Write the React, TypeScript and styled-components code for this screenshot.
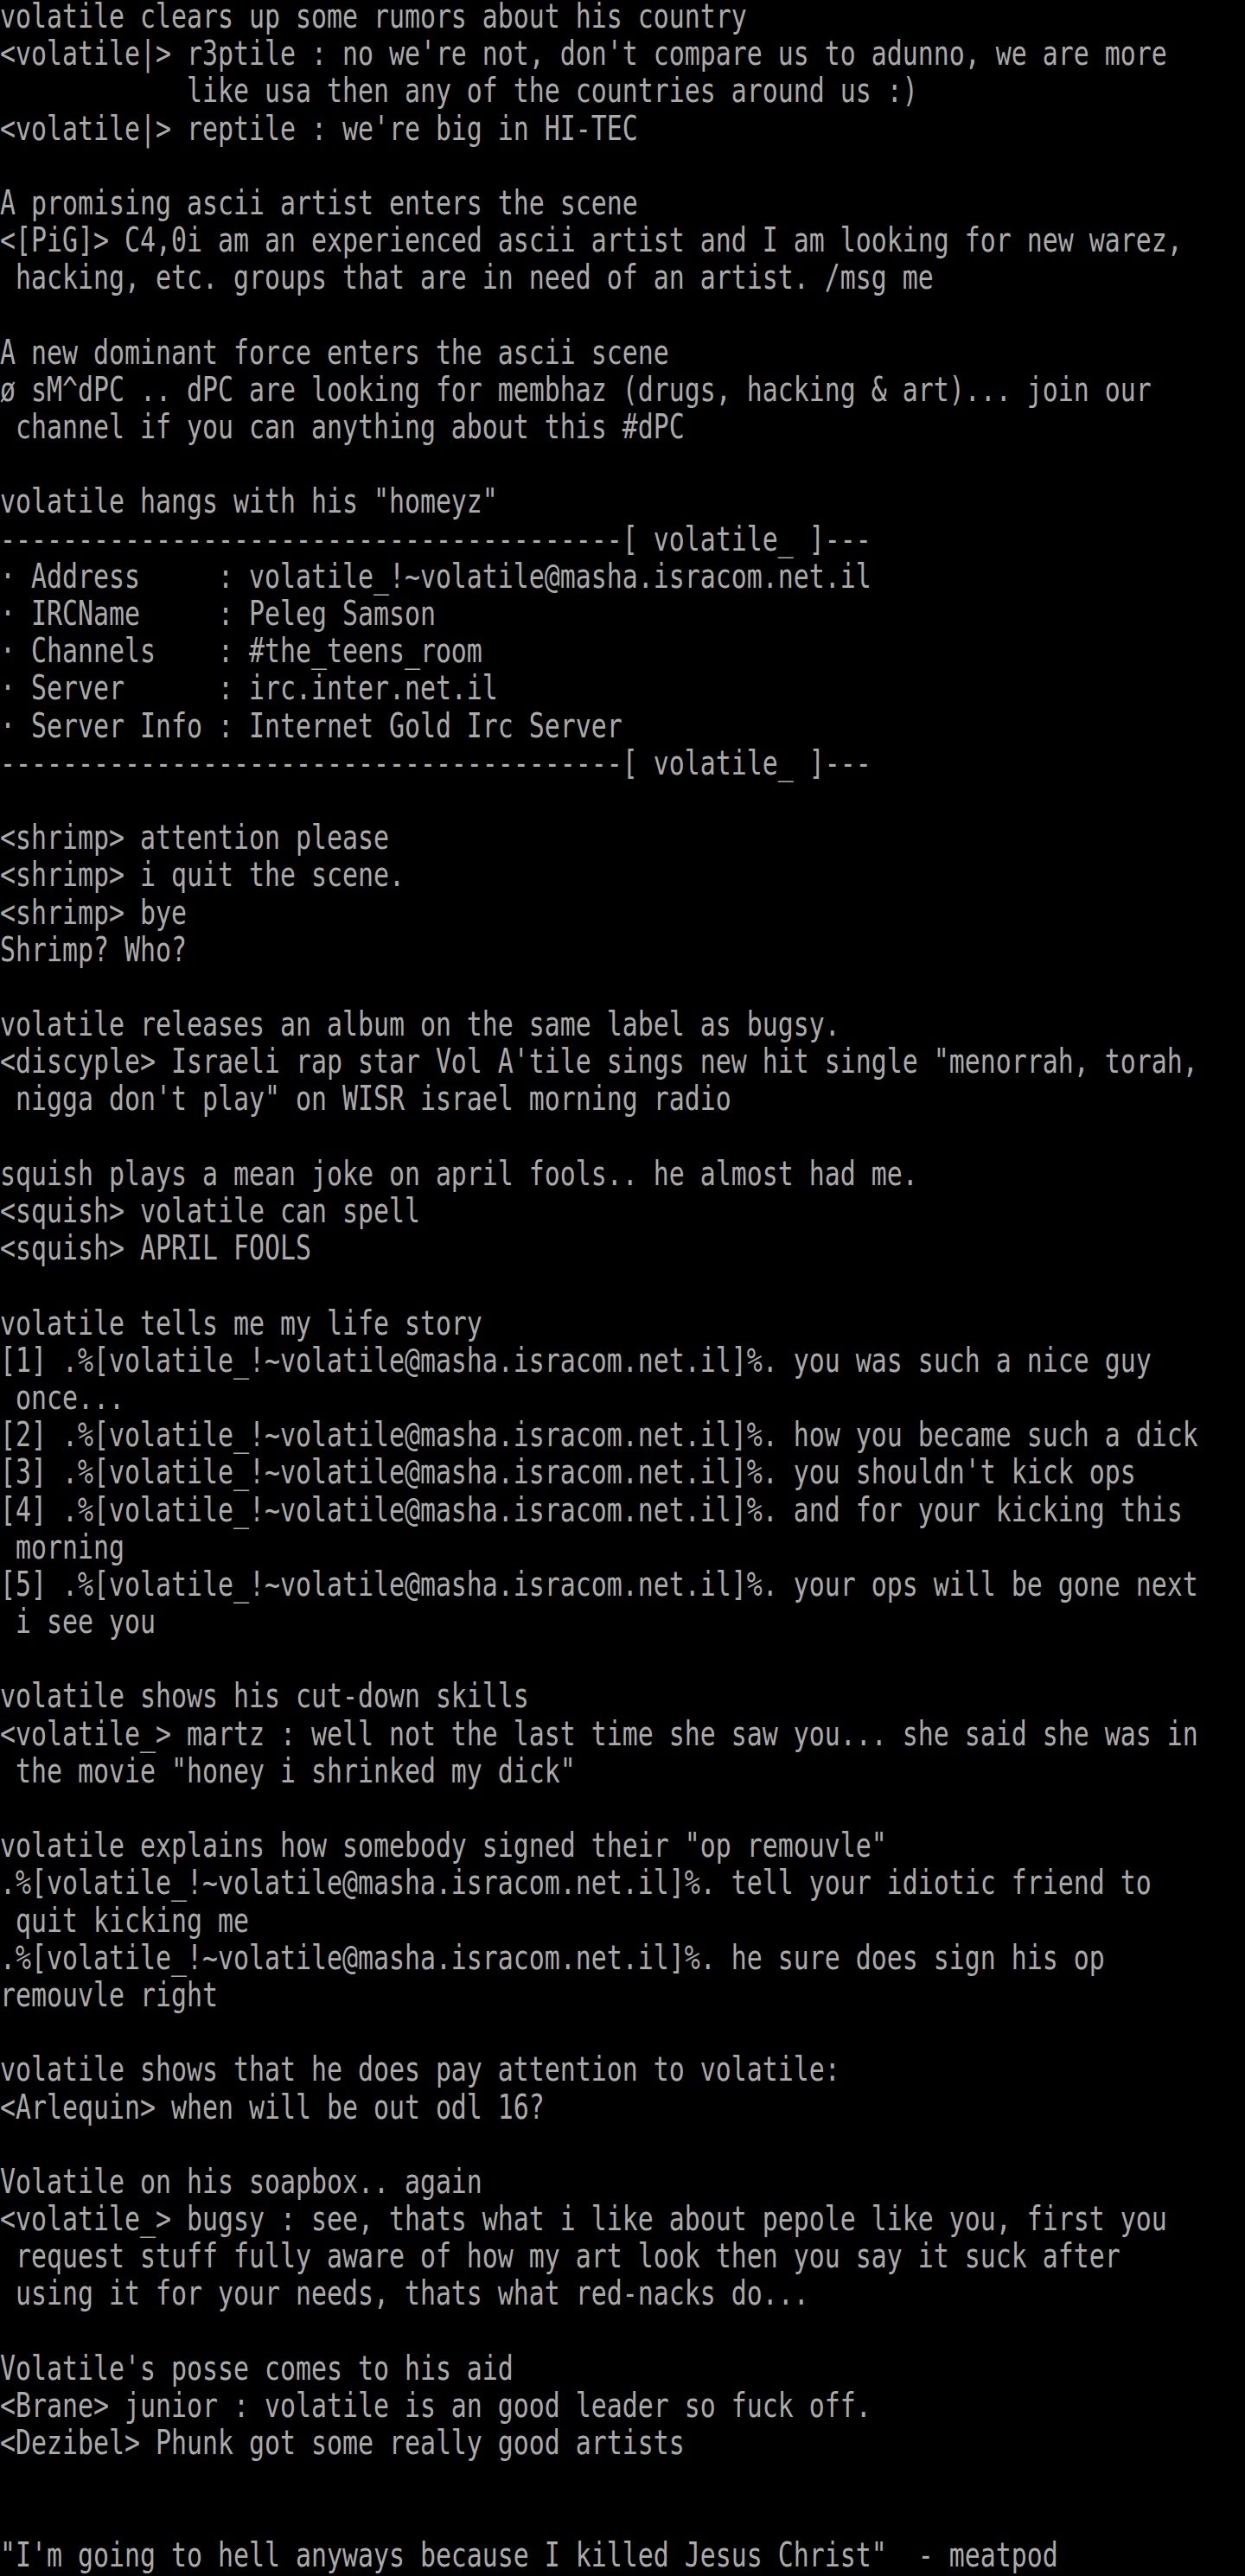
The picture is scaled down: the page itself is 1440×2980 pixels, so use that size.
import React from "react";
import styled, { createGlobalStyle } from "styled-components";

const GlobalStyle = createGlobalStyle`
  html, body {
    margin: 0;
    padding: 0;
    background: #000;
    overflow: hidden;
  }
`;

const Screen = styled.main`
  width: 1440px;
  height: 2980px;
  background: #000;
  color: #aaaaaa;
  display: flex;
  flex-direction: column;
`;

// one text-mode row: 80 cols x 69 rows on a 1440x2980 screen
const Row = styled.div`
  height: 43.19px;
  flex: none;
`;

// the VGA cell is tall and narrow, so stretch the mono glyphs vertically
const Glyphs = styled.span`
  display: block;
  font-family: "DejaVu Sans Mono", "Liberation Mono", monospace;
  font-size: 29.9px;
  line-height: 30.86px;
  white-space: pre;
  transform: scaleY(1.28);
  transform-origin: 0 0;
`;

const host = "volatile_!~volatile@masha.isracom.net.il";

const lines: string[] = [
  "volatile clears up some rumors about his country",
  "<volatile|> r3ptile : no we're not, don't compare us to adunno, we are more",
  "            like usa then any of the countries around us :)",
  "<volatile|> reptile : we're big in HI-TEC",
  "",
  "A promising ascii artist enters the scene",
  "<[PiG]> C4,0i am an experienced ascii artist and I am looking for new warez,",
  " hacking, etc. groups that are in need of an artist. /msg me",
  "",
  "A new dominant force enters the ascii scene",
  "ø sM^dPC .. dPC are looking for membhaz (drugs, hacking & art)... join our",
  " channel if you can anything about this #dPC",
  "",
  'volatile hangs with his "homeyz"',
  "----------------------------------------[ volatile_ ]---",
  "· Address     : " + host,
  "· IRCName     : Peleg Samson",
  "· Channels    : #the_teens_room",
  "· Server      : irc.inter.net.il",
  "· Server Info : Internet Gold Irc Server",
  "----------------------------------------[ volatile_ ]---",
  "",
  "<shrimp> attention please",
  "<shrimp> i quit the scene.",
  "<shrimp> bye",
  "Shrimp? Who?",
  "",
  "volatile releases an album on the same label as bugsy.",
  '<discyple> Israeli rap star Vol A\'tile sings new hit single "menorrah, torah,',
  ' nigga don\'t play" on WISR israel morning radio',
  "",
  "squish plays a mean joke on april fools.. he almost had me.",
  "<squish> volatile can spell",
  "<squish> APRIL FOOLS",
  "",
  "volatile tells me my life story",
  "[1] .%[" + host + "]%. you was such a nice guy",
  " once...",
  "[2] .%[" + host + "]%. how you became such a dick",
  "[3] .%[" + host + "]%. you shouldn't kick ops",
  "[4] .%[" + host + "]%. and for your kicking this",
  " morning",
  "[5] .%[" + host + "]%. your ops will be gone next",
  " i see you",
  "",
  "volatile shows his cut-down skills",
  "<volatile_> martz : well not the last time she saw you... she said she was in",
  ' the movie "honey i shrinked my dick"',
  "",
  'volatile explains how somebody signed their "op remouvle"',
  ".%[" + host + "]%. tell your idiotic friend to",
  " quit kicking me",
  ".%[" + host + "]%. he sure does sign his op",
  "remouvle right",
  "",
  "volatile shows that he does pay attention to volatile:",
  "<Arlequin> when will be out odl 16?",
  "",
  "Volatile on his soapbox.. again",
  "<volatile_> bugsy : see, thats what i like about pepole like you, first you",
  " request stuff fully aware of how my art look then you say it suck after",
  " using it for your needs, thats what red-nacks do...",
  "",
  "Volatile's posse comes to his aid",
  "<Brane> junior : volatile is an good leader so fuck off.",
  "<Dezibel> Phunk got some really good artists",
  "",
  "",
  '"I\'m going to hell anyways because I killed Jesus Christ"  - meatpod',
];

const App: React.FC = () => {
  return (
    <>
      <GlobalStyle />
      <Screen>
        {lines.map((l, i) => (
          <Row key={i}>
            <Glyphs>{l || " "}</Glyphs>
          </Row>
        ))}
      </Screen>
    </>
  );
};

export default App;
